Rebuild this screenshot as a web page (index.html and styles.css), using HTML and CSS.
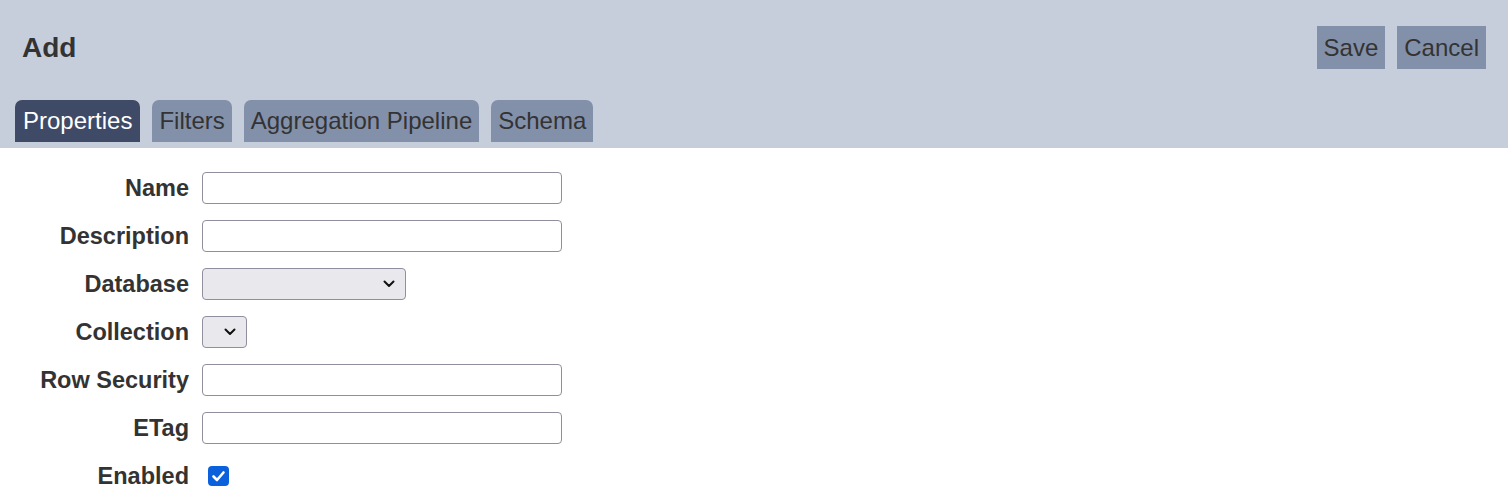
FILE: index.html
```html
<!DOCTYPE html>
<html lang="en">
<head>
<meta charset="UTF-8" />
<title>Add</title>
<link rel="stylesheet" href="styles.css">
</head>
<body>

<div class="header">
  <div class="titlebar">
    <h1>Add</h1>
    <div class="actions">
      <button type="button" class="btn">Save</button>
      <button type="button" class="btn">Cancel</button>
    </div>
  </div>
  <div class="tabs">
    <div class="tab active">Properties</div>
    <div class="tab">Filters</div>
    <div class="tab">Aggregation Pipeline</div>
    <div class="tab">Schema</div>
  </div>
</div>

<form class="props" onsubmit="event.preventDefault();">
  <label for="name">Name</label>
  <input type="text" id="name" />

  <label for="description">Description</label>
  <input type="text" id="description" />

  <label for="database">Database</label>
  <div class="select wide" id="database">
    <svg width="12" height="8" viewBox="0 0 12 8"><path d="M1.5 1.5 L6 6 L10.5 1.5" fill="none" stroke="#111" stroke-width="2" stroke-linecap="round" stroke-linejoin="round"/></svg>
  </div>

  <label for="collection">Collection</label>
  <div class="select narrow" id="collection">
    <svg width="12" height="8" viewBox="0 0 12 8"><path d="M1.5 1.5 L6 6 L10.5 1.5" fill="none" stroke="#111" stroke-width="2" stroke-linecap="round" stroke-linejoin="round"/></svg>
  </div>

  <label for="rowSecurity">Row Security</label>
  <input type="text" id="rowSecurity" />

  <label for="etag">ETag</label>
  <input type="text" id="etag" />

  <label for="enabled">Enabled</label>
  <div class="check-cell">
    <span class="checkbox" id="enabled">
      <svg width="21" height="20" viewBox="0 0 21 20"><path d="M5.5 10.5 L9 14 L15.5 6.5" fill="none" stroke="#fff" stroke-width="2.6" stroke-linecap="round" stroke-linejoin="round"/></svg>
    </span>
  </div>
</form>

</body>
</html>
```

FILE: styles.css
```css
/* Basic reset */
* {
  box-sizing: border-box;
  font-family: 'Liberation Sans', Arial, sans-serif;
}
body {
  margin: 0;
  background: white;
  color: #333;
}
.header {
  background: #c7cedb;
  padding-bottom: 6px;
}
.titlebar {
  display: flex;
  justify-content: space-between;
  align-items: center;
  padding: 26px 22px 0 22px;
}
h1 {
  margin: 0;
  font-size: 28px;
  font-weight: 700;
  color: #333;
}
.actions {
  display: flex;
  gap: 12px;
}
.btn {
  background: #8390aa;
  color: #333;
  border: none;
  height: 43px;
  padding: 0 7px;
  font-size: 24px;
  cursor: pointer;
}
.tabs {
  display: flex;
  gap: 12px;
  padding: 31px 15px 0 15px;
}
.tab {
  background: #8390aa;
  color: #333;
  height: 42px;
  line-height: 42px;
  padding: 0 7px;
  font-size: 24px;
  border-radius: 7px 7px 0 0;
}
.tab.active {
  background: #3e4a66;
  color: white;
  padding: 0 8px;
}
.props {
  display: grid;
  grid-template-columns: 189px auto;
  column-gap: 13px;
  row-gap: 16px;
  padding-top: 24px;
  justify-items: start;
  align-items: center;
}
.props label {
  justify-self: end;
  font-size: 23.5px;
  font-weight: 700;
  color: #333;
}
.props input[type=text] {
  width: 360px;
  height: 32px;
  border: 1px solid #8f8f9d;
  border-radius: 4px;
  font-size: 20px;
  padding: 0 6px;
}
.select {
  height: 32px;
  background: #e9e9ed;
  border: 1px solid #8f8f9d;
  border-radius: 4px;
  display: flex;
  align-items: center;
  justify-content: flex-end;
  padding-right: 10px;
}
.select.wide {
  width: 204px;
}
.select.narrow {
  width: 45px;
}
.check-cell {
  height: 32px;
  display: flex;
  align-items: center;
  padding-left: 6px;
}
.checkbox {
  width: 21px;
  height: 20px;
  background: #0b60db;
  border-radius: 4px;
  display: block;
}
.checkbox svg {
  display: block;
}
```
